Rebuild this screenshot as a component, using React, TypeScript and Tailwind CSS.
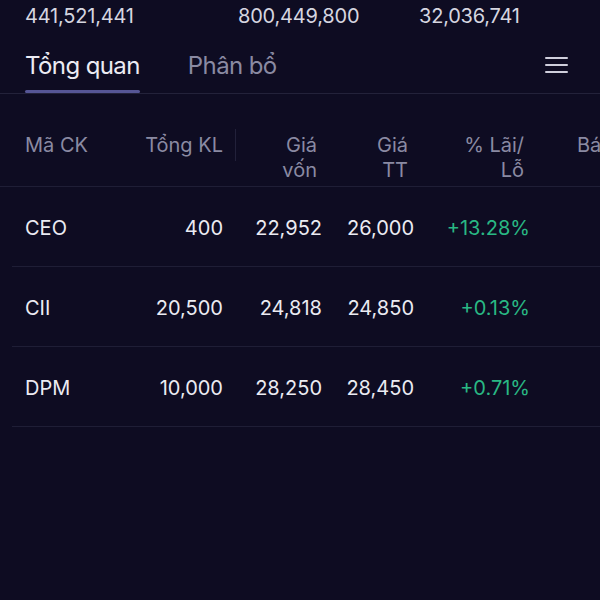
import React from "react";

const rows = [
  { code: "CEO", kl: "400", von: "22,952", tt: "26,000", pct: "+13.28%" },
  { code: "CII", kl: "20,500", von: "24,818", tt: "24,850", pct: "+0.13%" },
  { code: "DPM", kl: "10,000", von: "28,250", tt: "28,450", pct: "+0.71%" },
];

export default function App() {
  return (
    <div
      className="w-[600px] h-[600px] overflow-hidden bg-[#0e0c22] text-[20px]"
      style={{ fontFamily: "Inter, 'Noto Sans', sans-serif" }}
    >
      {/* top numbers */}
      <div className="flex pt-[2px] h-[30px] leading-[28px] text-[#d6d6e0] tracking-[-0.2px]">
        <div className="pl-[25px] w-[238px]">441,521,441</div>
        <div className="w-[181px]">800,449,800</div>
        <div>32,036,741</div>
      </div>

      {/* tabs */}
      <div className="flex items-end h-[64px] border-b border-[#23223a]">
        <div className="ml-[25px] flex flex-col items-stretch">
          <div className="text-[24px] leading-[30px] text-[#ececf4] tracking-[-0.6px]">Tổng quan</div>
          <div className="h-[3px] mt-[9px] bg-[#565696] rounded-sm" />
        </div>
        <div className="ml-[48px] mb-[12px] text-[24px] leading-[30px] text-[#8a8aa2] tracking-[-0.6px]">Phân bổ</div>
        <div className="ml-auto mr-[32px] mb-[20px] flex flex-col gap-[5px]">
          <div className="w-[23px] h-[2px] bg-[#cfcfdc] rounded" />
          <div className="w-[23px] h-[2px] bg-[#cfcfdc] rounded" />
          <div className="w-[23px] h-[2px] bg-[#cfcfdc] rounded" />
        </div>
      </div>

      {/* header */}
      <div className="border-b border-[#1f1e36]">
        <div className="ml-[12px] flex h-[92px] pt-[39px] leading-[25px] text-[#8a8aa2] whitespace-nowrap">
          <div className="w-[118px] shrink-0 pl-[13px]">Mã CK</div>
          <div className="w-[93px] shrink-0 text-right">Tổng KL</div>
          <div className="w-[13px] shrink-0 flex justify-end">
            <div className="w-px h-[32px] -mt-[4px] bg-[#22213a]" />
          </div>
          <div className="w-[86px] shrink-0 text-right pr-[5px]">Giá<br />vốn</div>
          <div className="w-[92px] shrink-0 text-right pr-[6px]">Giá<br />TT</div>
          <div className="w-[116px] shrink-0 text-right pr-[6px]">% Lãi/<br />Lỗ</div>
          <div className="w-[120px] shrink-0 pl-[47px]">Bán được</div>
        </div>
      </div>

      {/* rows */}
      <div className="ml-[12px]">
        {rows.map((r) => (
          <div
            key={r.code}
            className="flex items-center h-[80px] pt-[2px] border-b border-[#1f1e36] text-[#ebebf2] whitespace-nowrap"
          >
            <div className="w-[118px] shrink-0 pl-[13px]">{r.code}</div>
            <div className="w-[93px] shrink-0 text-right">{r.kl}</div>
            <div className="w-[13px] shrink-0" />
            <div className="w-[86px] shrink-0 text-right">{r.von}</div>
            <div className="w-[92px] shrink-0 text-right">{r.tt}</div>
            <div className="w-[116px] shrink-0 text-right text-[#29b884]">{r.pct}</div>
            <div className="w-[120px] shrink-0" />
          </div>
        ))}
      </div>
    </div>
  );
}
